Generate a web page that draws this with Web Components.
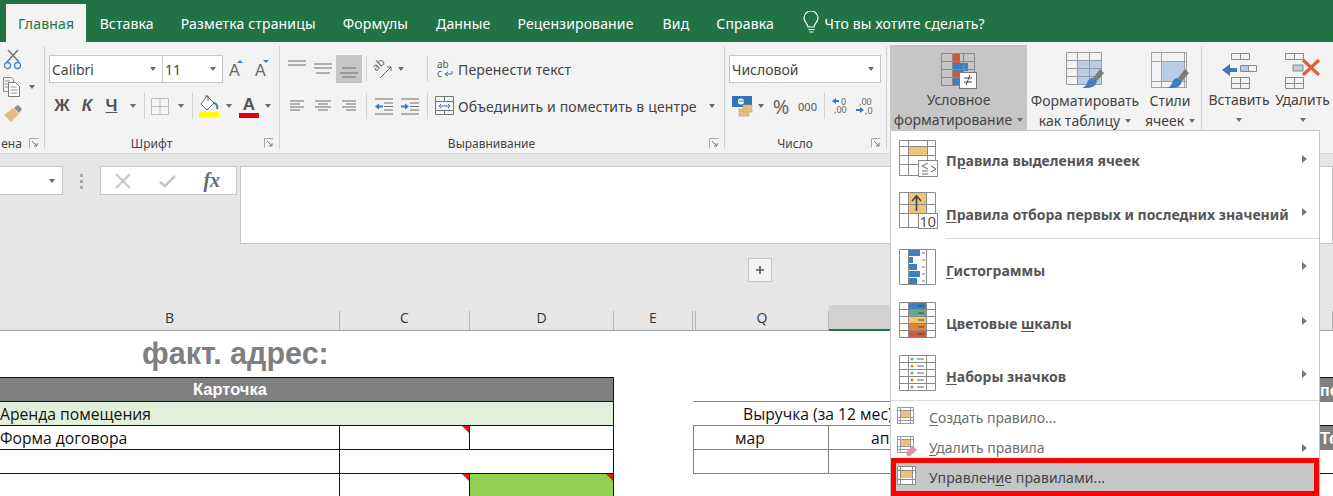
<!DOCTYPE html>
<html lang="ru">
<head>
<meta charset="utf-8">
<title>Excel</title>
<style>
  html, body { margin: 0; padding: 0; }
  body { width: 1333px; height: 496px; overflow: hidden; position: relative; background: #fff; font-family: "Noto Sans", sans-serif; }
</style>
</head>
<body>
<xl-tabs></xl-tabs>
<xl-ribbon></xl-ribbon>
<xl-formula></xl-formula>
<xl-sheet></xl-sheet>
<cf-menu></cf-menu>

<script>
// helpers for the little table pictures
const gridLines = (x, y, w, h, xs, ys, color = '#8a8a8a') => {
  let d = `M${x} ${y}h${w}v${h}h${-w}z`;
  xs.forEach(v => { d += `M${v} ${y}v${h}`; });
  ys.forEach(v => { d += `M${x} ${v}h${w}`; });
  return `<path d="${d}" fill="none" stroke="${color}" stroke-width="1"/>`;
};
const hLines = (rows, color = '#6e6e6e') =>
  `<path d="${rows.map(r => `M${r[0]} ${r[2]}H${r[1]}`).join('')}" stroke="${color}" stroke-width="1" fill="none"/>`;
const svg = (w, h, body) => `<svg width="${w}" height="${h}" viewBox="0 0 ${w} ${h}" style="display:block">${body}</svg>`;

const brush = (x, y) => `<g transform="translate(${x} ${y})">
  <path d="M12 0l4 4-7 8-4-3z" fill="#7c7c7c"/>
  <path d="M5 9l4 3c-1 5-5 7-10 7h-5c3-1 4-3 5-5 1-3 3-5 6-5z" fill="#3f7fbf"/>
</g>`;

const ICONS = {
  cut: svg(22, 22, `<path d="M5 13L16 1M17 13L6 1" stroke="#777" stroke-width="1.6" fill="none"/><circle cx="5.5" cy="16.5" r="3" fill="none" stroke="#4d86c4" stroke-width="1.3"/><circle cx="15.5" cy="16.5" r="3" fill="none" stroke="#4d86c4" stroke-width="1.3"/>`),
  copy: svg(18, 20, `<path d="M.5 .5h8l2 2v3M.5 .5v14h4" fill="none" stroke="#888"/><path d="M5.5 5.5h7l4 4v10h-11z" fill="#fff" stroke="#777"/><path d="M2 4h5M2 7h3M2 10h3M7.500 10h6M7.500 13h7M7.500 16h7" stroke="#999"/>`),
  painter: svg(20, 18, `<path d="M1 10l9-7 6 6-8 8z" fill="#e0bd80"/><path d="M11 3l4-3 4 4-3 4z" fill="#8a8a8a"/>`),
  fontUp: svg(16, 18, `<path d="M8 3l3-3 3 3z" fill="#3f7fbf"/><text x="0" y="16" font-family="Liberation Sans" font-size="16" fill="#666">A</text>`),
  fontDown: svg(16, 18, `<path d="M8 0l3 3 3-3z" fill="#3f7fbf"/><text x="0" y="16" font-family="Liberation Sans" font-size="16" fill="#666">A</text>`),
  borders: svg(18, 17, `<path d="M.5 .5h17v16h-17zM9 .5v16M.5 8.500h17" fill="none" stroke="#8b8b8b" stroke-dasharray="1 1"/>`),
  fill: svg(22, 23, `<path d="M9 1l7 7-7 7-6-6z" fill="#fff" stroke="#666"/><path d="M7 1h3v5" fill="none" stroke="#666"/><path d="M16 8c3 1 4 3 3 6" fill="none" stroke="#3f7fbf" stroke-width="2"/><rect x="1" y="17" width="20" height="5" fill="#ffff00"/>`),
  alignTop: svg(20, 20, hLines([[1, 19, 2], [1, 19, 6]], '#6a6a6a')),
  alignMid: svg(20, 20, hLines([[1, 19, 5], [1, 19, 9], [3, 17, 14]], '#6a6a6a')),
  alignBot: svg(20, 20, hLines([[3, 17, 9], [1, 19, 14], [3, 17, 18]], '#6a6a6a')),
  alignL: svg(16, 14, hLines([[1, 15, 2], [1, 11, 5], [1, 15, 8], [1, 11, 11]])),
  alignC: svg(16, 14, hLines([[0, 16, 2], [3, 13, 5], [0, 16, 8], [3, 13, 11]])),
  alignR: svg(16, 14, hLines([[1, 15, 2], [5, 15, 5], [1, 15, 8], [5, 15, 11]])),
  orient: svg(22, 22, `<text x="3" y="11" transform="rotate(-42 7 11)" font-family="Noto Sans" font-size="11" fill="#666">ab</text><path d="M8 20L19 9M15 9h4v4" fill="none" stroke="#666"/>`),
  indentL: svg(18, 17, `${hLines([[0, 18, 1], [9, 18, 5], [9, 18, 8.5], [9, 18, 12], [0, 18, 16]])}<path d="M0 8.500l4-3v2h4v2H4v2z" fill="#3b78ba"/>`),
  indentR: svg(18, 17, `${hLines([[0, 18, 1], [9, 18, 5], [9, 18, 8.5], [9, 18, 12], [0, 18, 16]])}<path d="M8 8.500l-4-3v2H0v2h4v2z" fill="#3b78ba"/>`),
  wrap: svg(18, 20, `<text x="1" y="9" font-family="Noto Sans" font-size="10" fill="#555">ab</text><text x="1" y="18" font-family="Noto Sans" font-size="10" fill="#555">c</text><path d="M16 12v3h-6M12 13l-3 2 3 2" fill="none" stroke="#3b78ba"/>`),
  merge: svg(20, 20, `<path d="M.5 .5h18v18H.5zM.5 5.500h18M.5 14.500h18M9.500 .5v5M9.500 14.500v4" fill="none" stroke="#777"/><path d="M4 10h11M6 8l-2 2 2 2M13 8l2 2-2 2" fill="none" stroke="#3b78ba"/>`),
  money: svg(21, 21, `<rect x="0" y="0" width="20" height="11" fill="#2f76b9"/><circle cx="9" cy="5.500" r="3" fill="#fff"/><path d="M7 5h5" stroke="#2f76b9"/><g fill="#edc67c" stroke="#c49a4a" stroke-width=".6"><rect x="7" y="17" width="10" height="3"/><rect x="7" y="13" width="10" height="3"/><rect x="11" y="9" width="9" height="3"/><rect x="11" y="13" width="9" height="3"/></g>`),
  decMore: svg(18, 20, `<path d="M0 5l4-3v2h3v2H4v2z" fill="#3b78ba"/><text x="9" y="9" font-family="Noto Sans" font-size="9" fill="#666">0</text><text x="2" y="17" font-family="Noto Sans" font-size="9" fill="#666">,00</text>`),
  decLess: svg(20, 20, `<text x="4" y="9" font-family="Noto Sans" font-size="9" fill="#666">,00</text><path d="M9 14l-4-3v2H1v2h4v2z" fill="#3b78ba"/><text x="10" y="18" font-family="Noto Sans" font-size="9" fill="#666">,0</text>`),
  bulb: svg(17, 24, `<path d="M5 16c0-3-4-5-4-9a7 7 0 0 1 14 0c0 4-4 6-4 9z" fill="none" stroke="#fff" stroke-width="1.2"/><path d="M5.500 18.500h6M6.500 21h4" stroke="#fff" stroke-width="1.2"/>`),
  launcher: svg(10, 10, `<path d="M.5 9.500V.5h9" fill="none" stroke="#a8a8a8"/><path d="M3 3l5 5M8 5v3H5" fill="none" stroke="#777"/>`),
  cond: svg(36, 36, `<rect x="12" y="1" width="7" height="9" fill="#d2583a"/><rect x="12" y="10" width="15" height="8" fill="#3f7fbf"/><rect x="12" y="18" width="11" height="7" fill="#d2583a"/><rect x="12" y="25" width="6" height="8" fill="#3f7fbf"/>${gridLines(.5, .5, 33, 32, [11.5, 22.5], [8.5, 16.5, 24.5])}<rect x="18.500" y="19.500" width="17" height="16" fill="#fff" stroke="#777"/><path d="M23 25h8M23 29h8M29 22l-4 10" stroke="#444" fill="none"/>`),
  table: svg(38, 40, `<rect x="11" y="9" width="24" height="23" fill="#b9cde4"/>${gridLines(.5, .5, 35, 32, [11.5, 23.5], [8.5, 16.5, 24.5], '#9a9a9a')}${brush(22, 17)}`),
  styles: svg(38, 40, `<rect x="10" y="10" width="24" height="19" fill="#b9cde4"/>${gridLines(.5, .5, 35, 35, [10.5, 33.5], [9.5, 29.5], '#a0a0a0')}${brush(22, 17)}`),
  ins: svg(36, 36, `${gridLines(10.5, .5, 18, 6, [19.5], [])}<path d="M1 17l8-6v4h7v4H9v4z" fill="#3b78ba"/>${gridLines(19.5, 12.5, 16, 6, [27.5], [], '#8a8a8a')}<rect x="20" y="13" width="7" height="5" fill="#b9cde4"/>${gridLines(10.5, 24.5, 18, 11, [19.5], [30.5])}`),
  del: svg(36, 36, `${gridLines(.5, .5, 18, 6, [9.5], [])}<rect x="8" y="12" width="10" height="6" fill="#b9cde4" stroke="#8a8a8a"/>${gridLines(.5, 24.5, 18, 11, [9.5], [30.5])}<path d="M18 7l16 15M34 7L18 22" stroke="#d9633f" stroke-width="3.200" fill="none"/>`),
  m1: svg(40, 38, `<rect x="9" y="7" width="19" height="8" fill="#efc578"/>${gridLines(.5, .5, 36, 35, [9.5, 28.5], [6.5, 15.5, 24.5])}<rect x="19.500" y="20.500" width="19" height="16" fill="#fff" stroke="#888"/><path d="M29 23l-6 3 6 3M23 31h6M23 34h6M32 26l5 3-5 3" fill="none" stroke="#666"/>`),
  m2: svg(40, 38, `<rect x="9" y="1" width="18" height="20" fill="#efc578"/>${gridLines(.5, .5, 36, 35, [9.5, 27.5], [12.5, 21.5])}<path d="M17.500 19V5M13 9l4.500-5L22 9" fill="none" stroke="#444" stroke-width="1.600"/><rect x="19.500" y="21.500" width="19" height="15" fill="#fff" stroke="#888"/><text x="20.500" y="35" font-family="Noto Sans" font-size="15" font-weight="400" letter-spacing="-.5" fill="#555">10</text>`),
  m3: svg(40, 36, `<path d="M9 1h12v6H9zM9 8h5v6H9zM9 15h9v6H9zM9 22h12v6H9zM9 29h9v6H9z" fill="#3f7fbf"/>${gridLines(.5, .5, 36, 35, [9.5, 27.5], [])}<path d="M23 4h3M23 11h3M23 18h3M23 25h3M23 32h3" stroke="#777"/>`),
  m4: svg(40, 36, `<rect x="9" y="1" width="18" height="7" fill="#3f7fbf"/><rect x="9" y="8" width="18" height="7" fill="#69a88c"/><rect x="9" y="15" width="18" height="7" fill="#edc67c"/><rect x="9" y="22" width="18" height="7" fill="#e88428"/><rect x="9" y="29" width="18" height="6" fill="#d2583a"/>${gridLines(.5, .5, 36, 35, [9.5, 27.5], [7.5, 14.5, 21.5, 28.5])}<path d="M19 4h6M19 11h6M19 18h6M19 25h6M19 32h6" stroke="#444"/>`),
  m5: svg(40, 36, `${gridLines(.5, .5, 36, 35, [9.5, 27.5], [7.5, 14.5, 21.5, 28.5])}<g fill="#69a88c"><circle cx="13" cy="4" r="1.500"/><circle cx="13" cy="18" r="1.500"/><circle cx="13" cy="32" r="1.500"/></g><g fill="#d9862e"><circle cx="13" cy="11" r="1.500"/><circle cx="13" cy="25" r="1.500"/></g><path d="M18 4h7M18 11h7M18 18h7M18 25h7M18 32h7" stroke="#666"/>`),
  m6: svg(18, 18, `<rect x="4" y="4" width="10" height="6" fill="#e9c27d"/>${gridLines(.5, .5, 16, 16, [3.5, 13.5], [3.5, 10.5, 13.5], '#9a9a9a')}`),
  m7: svg(20, 20, `<rect x="4" y="4" width="10" height="6" fill="#e9c27d"/>${gridLines(.5, .5, 16, 16, [3.5, 13.5], [3.5, 10.5, 13.5], '#9a9a9a')}<path d="M9 16l7-6 4 4-7 6h-3z" fill="#e78fa3"/>`),
  m8: svg(20, 20, `<rect x="0" y="0" width="19" height="19" fill="#fff"/><rect x="4" y="5" width="11" height="7" fill="#e9c27d"/>${gridLines(.5, .5, 18, 18, [3.5, 15.5], [4.5, 13.5], '#8a8a8a')}`)
};

class XlIcon extends HTMLElement {
  constructor() {
    super();
    this.attachShadow({ mode: 'open' });
  }
  connectedCallback() {
    this.shadowRoot.innerHTML = `
      <style>:host { display: flex; align-items: center; justify-content: center; }</style>
      ${ICONS[this.getAttribute('name')] || ''}`;
  }
}
customElements.define('xl-icon', XlIcon);

class RbCaret extends HTMLElement {
  constructor() {
    super();
    this.attachShadow({ mode: 'open' }).innerHTML = `
      <style>
        :host { display: flex; align-items: center; justify-content: center; }
        i { width: 0; height: 0; border: 3.5px solid transparent; border-top: 4px solid #6a6a6a; border-bottom: 0; }
      </style><i></i>`;
  }
}
customElements.define('rb-caret', RbCaret);

class RbSep extends HTMLElement {
  constructor() {
    super();
    this.attachShadow({ mode: 'open' }).innerHTML = `
      <style>
        :host { display: flex; justify-content: center; height: 26px; }
        i { width: 1px; background: #d2d2d2; }
      </style><i></i>`;
  }
}
customElements.define('rb-sep', RbSep);

class RbCombo extends HTMLElement {
  constructor() {
    super();
    this.attachShadow({ mode: 'open' }).innerHTML = `
      <style>
        :host { display: flex; align-items: center; justify-content: space-between; box-sizing: border-box; height: 28px;
                background: #fff; border: 1px solid #c6c6c6; padding: 0 4px 0 2px; font-size: 14px; color: #444; }
        rb-caret { width: 10px; }
      </style><slot></slot><rb-caret></rb-caret>`;
  }
}
customElements.define('rb-combo', RbCombo);

class RbGroup extends HTMLElement {
  constructor() {
    super();
    this.attachShadow({ mode: 'open' }).innerHTML = `
      <style>
        :host { display: flex; flex-direction: column; box-sizing: border-box; height: 103px; margin-top: 4px;
                border-right: 1px solid #d2d2d2; color: #444; font-size: 14px; }
        .body { flex: 1; padding: var(--pad, 9px 0 0 4px); min-height: 0; }
        footer { display: flex; align-items: center; height: 20px; font-size: 12px; margin-bottom: -4px; }
        .name { flex: 1; text-align: center; padding-right: 6px; }
        xl-icon { width: 10px; margin-right: 5px; }
        :host([plain]) footer { display: none; }
      </style>
      <div class="body"><slot></slot></div>
      <footer><span class="name"><slot name="label"></slot></span><xl-icon name="launcher"></xl-icon></footer>`;
  }
}
customElements.define('rb-group', RbGroup);

class XlTabs extends HTMLElement {
  constructor() {
    super();
    this.attachShadow({ mode: 'open' }).innerHTML = `
      <style>
        :host { display: flex; height: 42px; background: #217346; color: #fff; font-size: 14px; padding-left: 6px; box-sizing: border-box; letter-spacing: .15px; }
        span { margin-top: 4px; height: 38px; display: flex; align-items: center; padding: 0 13.500px; white-space: nowrap; }
        .on { background: #f3f3f3; color: #217346; padding: 0 12px; }
        .tell { padding: 0 0 0 16px; }
        xl-icon { margin-right: 4px; }
      </style>
      <span class="on">Главная</span><span>Вставка</span><span>Разметка страницы</span><span>Формулы</span><span style="margin-left:1px">Данные</span>
      <span>Рецензирование</span><span style="margin-left:2px">Вид</span><span>Справка</span>
      <span class="tell"><xl-icon name="bulb"></xl-icon>Что вы хотите сделать?</span>`;
  }
}
customElements.define('xl-tabs', XlTabs);

class XlRibbon extends HTMLElement {
  constructor() {
    super();
    this.attachShadow({ mode: 'open' }).innerHTML = `
      <style>
        :host { display: flex; height: 112px; box-sizing: border-box; background: #f3f3f3; border-bottom: 1px solid #d4d4d4; font-family: "Noto Sans", sans-serif; }
        .row { display: grid; align-items: center; height: 28px; }
        .row + .row { margin-top: 9px; }
        .bold { font: bold 17px "Liberation Sans", sans-serif; color: #555; text-align: center; }
        .big { display: grid; margin-top: -1px; }
        .bigbtn { display: flex; flex-direction: column; align-items: center; text-align: center; font-size: 14px; line-height: 20px; box-sizing: border-box; padding-top: 8px; height: 85px; }
        .bigbtn xl-icon { height: 37px; margin-bottom: 1px; }
        .on { background: #c6c6c6; }
        .cap { display: flex; align-items: center; justify-content: center; gap: 4px; white-space: nowrap; height: 20px; }
        .cap rb-caret { width: 7px; }
        .clip { display: flex; flex-direction: column; align-items: flex-start; }
        .txt { white-space: nowrap; font-size: 14px; letter-spacing: .15px; }
      </style>

      <rb-group style="width:45px;--pad:0 0 0 2px">
        <div class="clip">
          <xl-icon name="cut" style="height:28px;width:22px"></xl-icon>
          <div style="display:flex;align-items:center;height:26px"><xl-icon name="copy" style="width:20px"></xl-icon><rb-caret style="width:20px"></rb-caret></div>
          <xl-icon name="painter" style="height:28px;width:22px"></xl-icon>
        </div>
        <span slot="label">ена</span>
      </rb-group>

      <rb-group style="width:235px">
        <div class="row" style="grid-template-columns:114px 60px 27px 25px">
          <rb-combo>Calibri</rb-combo><rb-combo style="margin-left:-1px">11</rb-combo>
          <xl-icon name="fontUp"></xl-icon>
          <xl-icon name="fontDown"></xl-icon>
        </div>
        <div class="row" style="grid-template-columns:26px 24px 25px 18px 4px 28px 14px 8px 26px 14px 26px 12px">
          <span class="bold">Ж</span><span class="bold" style="font-style:italic">К</span><span class="bold" style="text-decoration:underline">Ч</span><rb-caret></rb-caret>
          <rb-sep></rb-sep><xl-icon name="borders"></xl-icon><rb-caret></rb-caret><rb-sep></rb-sep>
          <xl-icon name="fill"></xl-icon><rb-caret></rb-caret>
          <span class="bold" style="border-bottom:5px solid #e3000f;line-height:17px;margin:0 3px;padding-top:2px">A</span><rb-caret></rb-caret>
        </div>
        <span slot="label">Шрифт</span>
      </rb-group>

      <rb-group style="width:445px">
        <div class="row" style="grid-template-columns:26px 26px 26px 8px 26px 10px 17px 8px 27px 1fr">
          <xl-icon name="alignTop"></xl-icon><xl-icon name="alignMid"></xl-icon><xl-icon name="alignBot" class="on" style="height:28px"></xl-icon>
          <rb-sep></rb-sep><xl-icon name="orient"></xl-icon><rb-caret></rb-caret><span></span><rb-sep></rb-sep>
          <xl-icon name="wrap"></xl-icon><span class="txt">Перенести текст</span>
        </div>
        <div class="row" style="grid-template-columns:26px 26px 26px 8px 27px 26px 8px 27px 248px 12px">
          <xl-icon name="alignL"></xl-icon><xl-icon name="alignC"></xl-icon><xl-icon name="alignR"></xl-icon>
          <rb-sep></rb-sep><xl-icon name="indentL"></xl-icon><xl-icon name="indentR"></xl-icon><rb-sep></rb-sep>
          <xl-icon name="merge"></xl-icon><span class="txt">Объединить и поместить в центре</span><rb-caret></rb-caret>
        </div>
        <span slot="label">Выравнивание</span>
      </rb-group>

      <rb-group style="width:162px">
        <div class="row" style="grid-template-columns:152px"><rb-combo>Числовой</rb-combo></div>
        <div class="row" style="grid-template-columns:26px 12px 28px 25px 8px 26px 22px">
          <xl-icon name="money"></xl-icon><rb-caret></rb-caret>
          <span style="font-size:20px;text-align:center;color:#666">%</span>
          <span style="font-size:11px;text-align:center;color:#555">000</span>
          <rb-sep></rb-sep><xl-icon name="decMore"></xl-icon><xl-icon name="decLess"></xl-icon>
        </div>
        <span slot="label">Число</span>
      </rb-group>

      <rb-group plain style="width:315px;--pad:0 0 0 3px">
        <div class="big" style="grid-template-columns:137px 116px 54px">
          <div class="bigbtn on"><xl-icon name="cond"></xl-icon><div>Условное</div><div class="cap">форматирование<rb-caret></rb-caret></div></div>
          <div class="bigbtn"><xl-icon name="table"></xl-icon><div>Форматировать</div><div class="cap">как таблицу<rb-caret></rb-caret></div></div>
          <div class="bigbtn"><xl-icon name="styles"></xl-icon><div>Стили</div><div class="cap">ячеек<rb-caret></rb-caret></div></div>
        </div>
      </rb-group>

      <rb-group plain style="flex:1;border-right:0;--pad:0 0 0 4px">
        <div class="big" style="grid-template-columns:66px 61px">
          <div class="bigbtn"><xl-icon name="ins"></xl-icon><div>Вставить</div><div class="cap"><rb-caret></rb-caret></div></div>
          <div class="bigbtn"><xl-icon name="del"></xl-icon><div>Удалить</div><div class="cap"><rb-caret></rb-caret></div></div>
        </div>
      </rb-group>`;
  }
}
customElements.define('xl-ribbon', XlRibbon);

class XlFormula extends HTMLElement {
  constructor() {
    super();
    this.attachShadow({ mode: 'open' }).innerHTML = `
      <style>
        :host { display: block; height: 151px; box-sizing: border-box; background: #e6e6e6; padding-top: 12px; }
        .bar { display: flex; align-items: flex-start; }
        .box { box-sizing: border-box; height: 29px; background: #fff; border: 1px solid #c6c6c6; display: flex; align-items: center; }
        .name { width: 63px; border-left: 0; justify-content: flex-end; padding-right: 5px; }
        .name rb-caret { width: 10px; }
        .dots { width: 37px; display: flex; flex-direction: column; align-items: center; gap: 3px; padding-top: 8px; }
        .dots i { width: 3px; height: 3px; background: #a8a8a8; }
        .fn { width: 137px; justify-content: space-around; padding-right: 2px; }
        .input { flex: 1; height: 78px; margin-left: 3px; }
        .plus { box-sizing: border-box; width: 24px; height: 24px; margin: 14px 0 0 748px; background: #f4f4f4; border: 1px solid #c6c6c6; display: flex; align-items: center; justify-content: center; }
        .fx { font: italic bold 20px "Liberation Serif", serif; color: #6a6a6a; }
      </style>
      <div class="bar">
        <div class="box name"><rb-caret></rb-caret></div>
        <div class="dots"><i></i><i></i><i></i></div>
        <div class="box fn">
          <svg width="16" height="16" viewBox="0 0 16 16"><path d="M1 1l14 14M15 1L1 15" stroke="#c4c4c4" stroke-width="1.800" fill="none"/></svg>
          <svg width="17" height="14" viewBox="0 0 17 14"><path d="M1 8l5 4L16 2" stroke="#c4c4c4" stroke-width="2.600" fill="none"/></svg>
          <span class="fx">fx</span>
        </div>
        <div class="box input"></div>
      </div>
      <div class="plus"><svg width="10" height="10" viewBox="0 0 10 10"><path d="M5 1v8M1 5h8" stroke="#555" stroke-width="1.600"/></svg></div>`;
  }
}
customElements.define('xl-formula', XlFormula);

class XlSheet extends HTMLElement {
  constructor() {
    super();
    this.attachShadow({ mode: 'open' }).innerHTML = `
      <style>
        :host { display: block; font-family: "Open Sans", sans-serif; color: #111; overflow: hidden; height: 191px; }
        .heads, .cells { display: grid; grid-template-columns: 340px 130px 144px 79px 3px 133px 491px 13px; }
        .heads { height: 26px; box-sizing: border-box; background: #e6e6e6; border-bottom: 1px solid #9e9e9e; font-size: 14px; color: #333; }
        .heads div { display: flex; align-items: center; justify-content: center; border-right: 1px solid #b4b4b4; margin-top: 6px; padding-bottom: 6px; height: 13px; padding-top: 0; }
        .heads .sel { background: #d2d2d2; border-right: 0; margin-top: 0; height: 24px; padding-bottom: 0; border-bottom: 2px solid #217346; }
        .cells { grid-template-rows: 47px 24px 24px 24px 24px 24px; font-size: 15.700px; }
        .cells > div { box-sizing: border-box; position: relative; white-space: nowrap; overflow: hidden; display: flex; align-items: center; padding-top: 1px; }
        .t { border-bottom: 1px solid #111; }
        .rb { border-right: 1px solid #111; }
        .cells > .title { grid-column: 1 / 4; padding: 0 0 2px 142px; font: bold 30.500px "Liberation Sans", sans-serif; color: #7f7f7f; }
        .cells > .card { grid-column: 1 / 4; background: #808080; color: #fff; font: bold 16.500px "Liberation Sans", sans-serif; padding: 0 0 1px 193px; }
        .rent { grid-column: 1 / 4; background: #e2efda; }
        .g { border-bottom: 1px solid #808080; justify-content: center; }
        .gr { border-right: 1px solid #808080; }
        .gl { border-left: 1px solid #808080; }
        .green { background: #92d050; }
        .dark { background: #808080; color: #fff; font: bold 16px "Liberation Sans", sans-serif; border-top: 1px solid #111; margin-top: -1px; }
        .tri::after { content: ""; position: absolute; top: 0; right: 0; border-top: 7px solid #d8201a; border-left: 7px solid transparent; }
      </style>
      <div class="heads">
        <div>B</div><div>C</div><div>D</div><div>E</div><div></div><div>Q</div><div class="sel"></div><div></div>
      </div>
      <div class="cells">
        <div class="title t" style="grid-row:1">факт. адрес:</div>

        <div class="card t rb" style="grid-row:2">Карточка</div>
        <div class="dark" style="grid-row:2;grid-column:8">по</div>

        <div class="rent t rb" style="grid-row:3">Аренда помещения</div>
        <div class="g" style="grid-row:3;grid-column:6 / 8;justify-content:flex-start;padding-left:50px;margin-left:-3px;border-top:1px solid #808080;margin-top:-1px;height:25px">Выручка (за 12 мес)</div>

        <div class="t rb" style="grid-row:4;grid-column:1">Форма договора</div>
        <div class="t rb tri" style="grid-row:4;grid-column:2"></div>
        <div class="t rb" style="grid-row:4;grid-column:3"></div>
        <div class="g gr gl" style="grid-row:4;grid-column:6;margin-left:-3px;padding-right:22px">мар</div>
        <div class="g" style="grid-row:4;grid-column:7;justify-content:flex-start;padding-left:42px">апр</div>
        <div class="dark" style="grid-row:4;grid-column:8">Те</div>

        <div class="t rb" style="grid-row:5;grid-column:1"></div>
        <div class="t rb" style="grid-row:5;grid-column:2 / 4"></div>
        <div class="g gr gl" style="grid-row:5;grid-column:6;margin-left:-3px"></div>
        <div class="g" style="grid-row:5;grid-column:7"></div>
        <div class="t" style="grid-row:5;grid-column:8"></div>

        <div class="rb" style="grid-row:6;grid-column:1"></div>
        <div class="rb tri" style="grid-row:6;grid-column:2"></div>
        <div class="green rb tri" style="grid-row:6;grid-column:3"></div>
      </div>`;
  }
}
customElements.define('xl-sheet', XlSheet);

class CfItem extends HTMLElement {
  constructor() {
    super();
    this.attachShadow({ mode: 'open' });
  }
  connectedCallback() {
    const arrow = this.hasAttribute('arrow');
    this.shadowRoot.innerHTML = `
      <style>
        :host { display: flex; align-items: center; box-sizing: border-box; height: var(--h, 53px); padding: 0 12px 0 var(--pl, 8px); }
        xl-icon { width: var(--iw, 47px); justify-content: flex-start; margin-bottom: var(--ic, 0); flex: none; }
        .t { flex: 1; margin-top: var(--tx, 8px); white-space: nowrap; }
        i { width: 0; height: 0; border: 4.500px solid transparent; border-left: 5px solid #777; border-right: 0; margin-bottom: var(--ar, 0); }
      </style>
      <xl-icon name="${this.getAttribute('icon')}"></xl-icon>
      <span class="t"><slot></slot></span>
      ${arrow ? '<i></i>' : ''}`;
  }
}
customElements.define('cf-item', CfItem);

class CfMenu extends HTMLElement {
  constructor() {
    super();
    this.attachShadow({ mode: 'open' }).innerHTML = `
      <style>
        /* the dropdown lies over the sheet, so it is the one absolute box */
        :host { position: absolute; left: 890px; top: 130px; width: 430px; height: 366px; box-sizing: border-box; background: #fff;
                border: 1px solid #c6c6c6; border-bottom: 0; padding-top: 3px; font-family: "Noto Sans", sans-serif; font-size: 14px; overflow: hidden; }
        .big { font-weight: bold; color: #555; }
        .small { color: #6e6e6e; --pl: 6px; --iw: 32px; --h: 30px; }
        hr { margin: 0 0 0 55px; border: 0; border-top: 1px solid #dcdcdc; height: 0; }
        hr.wide { margin: 0; }
        .manage { box-sizing: border-box; height: 38px; margin-top: -5px; background: #c6c6c6; border: 5px solid #f00; --pl: 1px; --iw: 32px; color: #444; --ic: 2px; --tx: 0; letter-spacing: .1px; }
        u { text-underline-offset: 2px; }
      </style>
      <cf-item class="big" icon="m1" arrow style="--h:54px;--ic:4px;--tx:-2px;--ar:4px">П<u>р</u>авила выделения ячеек</cf-item>
      <cf-item class="big" icon="m2" arrow style="--h:50px;--ic:4px;--tx:2px;--ar:2px"><u>П</u>равила отбора первых и последних значений</cf-item>
      <hr>
      <cf-item class="big" icon="m3" arrow style="--h:56px;--ic:0;--tx:6px;--ar:2px"><u>Г</u>истограммы</cf-item>
      <cf-item class="big" icon="m4" arrow style="--h:53px;--ic:3px;--tx:3px;--ar:2px">Цветовые <u>ш</u>калы</cf-item>
      <cf-item class="big" icon="m5" arrow style="--h:52px;--ic:3px;--tx:4px;--ar:0"><u>Н</u>аборы значков</cf-item>
      <hr class="wide">
      <div style="height:2px"></div>
      <cf-item class="small" icon="m6" style="--ic:5px;--tx:-2px"><u>С</u>оздать правило...</cf-item>
      <cf-item class="small" icon="m7" arrow style="--ic:4px;--tx:-2px"><u>У</u>далить правила</cf-item>
      <div class="manage"><cf-item icon="m8" style="--h:28px">Управлен<u>и</u>е правилами...</cf-item></div>`;
  }
}
customElements.define('cf-menu', CfMenu);
</script>
</body>
</html>
